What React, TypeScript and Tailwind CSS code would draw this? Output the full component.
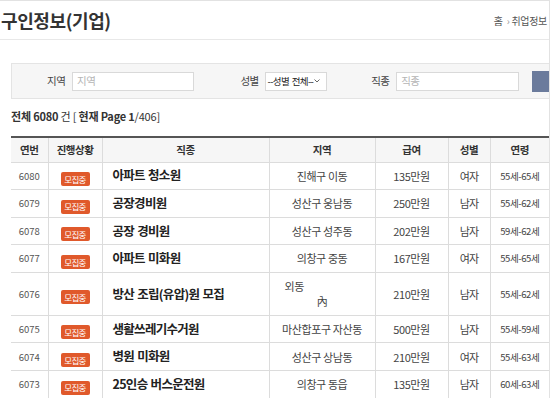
import React from "react";

interface Job {
    no: number;
    title: string;
    area: string;
    pay: string;
    gender: string;
    age: string;
}

const JOBS: Job[] = [
    { no: 6080, title: "아파트 청소원", area: "진해구 이동", pay: "135만원", gender: "여자", age: "55세-65세" },
    { no: 6079, title: "공장경비원", area: "성산구 웅남동", pay: "250만원", gender: "남자", age: "55세-62세" },
    { no: 6078, title: "공장 경비원", area: "성산구 성주동", pay: "202만원", gender: "남자", age: "59세-62세" },
    { no: 6077, title: "아파트 미화원", area: "의창구 중동", pay: "167만원", gender: "여자", age: "55세-65세" },
    { no: 6076, title: "방산 조립(유압)원 모집", area: "", pay: "210만원", gender: "남자", age: "55세-62세" },
    { no: 6075, title: "생활쓰레기수거원", area: "마산합포구 자산동", pay: "500만원", gender: "남자", age: "55세-59세" },
    { no: 6074, title: "병원 미화원", area: "성산구 상남동", pay: "210만원", gender: "여자", age: "55세-63세" },
    { no: 6073, title: "25인승 버스운전원", area: "의창구 동읍", pay: "135만원", gender: "남자", age: "60세-63세" },
];

const FONT = "font-['Noto_Sans_CJK_KR','Noto_Sans',sans-serif]";

export default function App() {
    return (
        <div className={`w-[550px] h-[398px] overflow-hidden bg-white border-t border-r border-[#e2e2e2] text-[#333] ${FONT}`}>
            {/* page title */}
            <div className="flex justify-between items-end h-[39px] border-b border-[#e8e8e8]">
                <h2 className="text-[18px] font-bold leading-none pb-[10px] pl-[1px] tracking-[-0.4px] text-[#333]">
                    구인정보(기업)
                </h2>
                <div className="text-[10px] text-[#555] pb-[11px] pr-[2px] tracking-[-0.3px]">
                    홈 <span className="text-[#999] px-[2px]">›</span>취업정보
                </div>
            </div>

            {/* search box */}
            <div className="mt-[23px] ml-[11px] w-[560px] h-[36px] bg-[#f6f6f6] border border-[#e4e4e4] flex items-center text-[10.5px] text-[#444]">
                <span className="ml-[35px] w-[26px] tracking-[-0.5px]">지역</span>
                <div className="w-[127px] h-[19px] bg-white border border-[#d9d9d9] flex items-center pl-[4px] text-[#b5b5b5] tracking-[-0.5px]">
                    지역
                </div>
                <span className="ml-[46px] w-[26px] tracking-[-0.5px]">성별</span>
                <div className="w-[64px] h-[19px] bg-white border border-[#d9d9d9] flex items-center pl-[1px] text-[9.5px] tracking-[-0.6px] [word-spacing:1px] text-[#222] whitespace-nowrap overflow-hidden">
                    --성별 전체--
                    <svg width="6" height="4" viewBox="0 0 6 4" className="ml-[1px] shrink-0">
                        <path d="M0.5 0.5 L3 3 L5.5 0.5" fill="none" stroke="#555" strokeWidth="0.9" />
                    </svg>
                </div>
                <span className="ml-[44px] w-[26px] tracking-[-0.5px]">직종</span>
                <div className="w-[127px] h-[19px] bg-white border border-[#d9d9d9] flex items-center pl-[4px] text-[#b5b5b5] tracking-[-0.5px]">
                    직종
                </div>
                <div className="ml-[13px] w-[40px] h-[21px] bg-[#6b7b9c]" />
            </div>

            {/* count */}
            <div className="mt-[12px] ml-[11px] text-[11px] leading-none tracking-[-0.2px] text-[#333]">
                <b>전체 6080</b> 건 [ <b>현재 Page 1</b>/406]
            </div>

            {/* list */}
            <table className="mt-[14px] ml-[11px] w-[538px] table-fixed border-collapse text-center">
                <colgroup>
                    <col className="w-[37px]" />
                    <col className="w-[54px]" />
                    <col className="w-[167px]" />
                    <col className="w-[106px]" />
                    <col className="w-[73px]" />
                    <col className="w-[42px]" />
                    <col className="w-[59px]" />
                </colgroup>
                <thead>
                    <tr className="h-[25px] bg-[#f6f6f6] border-t-2 border-[#555] text-[10.5px] font-bold text-[#333] tracking-[-0.5px]">
                        <th className="border-b border-[#dcdcdc]">연번</th>
                        <th className="border-b border-l border-[#dcdcdc]">진행상황</th>
                        <th className="border-b border-l border-[#dcdcdc]">직종</th>
                        <th className="border-b border-l border-[#dcdcdc]">지역</th>
                        <th className="border-b border-l border-[#dcdcdc]">급여</th>
                        <th className="border-b border-l border-[#dcdcdc]">성별</th>
                        <th className="border-b border-l border-[#dcdcdc]">연령</th>
                    </tr>
                </thead>
                <tbody>
                    {JOBS.map((job) => {
                        const tall = job.no === 6076;
                        return (
                            <tr key={job.no} className={tall ? "h-[43px]" : "h-[27.6px]"}>
                                <td className="border-b border-[#dcdcdc] text-[9.5px] text-[#555]">{job.no}</td>
                                <td className="border-b border-l border-[#dcdcdc]">
                                    <span className="inline-flex items-center justify-center w-[29px] h-[14px] rounded-[2px] bg-[#e0592b] text-white text-[8.5px] tracking-[-0.6px] leading-none">
                                        모집중
                                    </span>
                                </td>
                                <td className="border-b border-l border-[#dcdcdc] text-left pl-[10px] text-[12.5px] font-bold text-[#222] tracking-[-0.7px] [word-spacing:1px]">
                                    {job.title}
                                </td>
                                <td className="border-b border-l border-[#dcdcdc] text-[11px] text-[#444] tracking-[-0.4px]">
                                    {tall ? (
                                        <div className="leading-[15px]">
                                            <div className="text-left pl-[15px]">외동</div>
                                            <div>內</div>
                                        </div>
                                    ) : (
                                        job.area
                                    )}
                                </td>
                                <td className="border-b border-l border-[#dcdcdc] text-[11px] text-[#444] tracking-[-0.4px]">{job.pay}</td>
                                <td className="border-b border-l border-[#dcdcdc] text-[11px] text-[#444] tracking-[-0.8px]">{job.gender}</td>
                                <td className="border-b border-l border-[#dcdcdc] text-[9.5px] text-[#444] tracking-[-0.4px]">{job.age}</td>
                            </tr>
                        );
                    })}
                </tbody>
            </table>
        </div>
    );
}
